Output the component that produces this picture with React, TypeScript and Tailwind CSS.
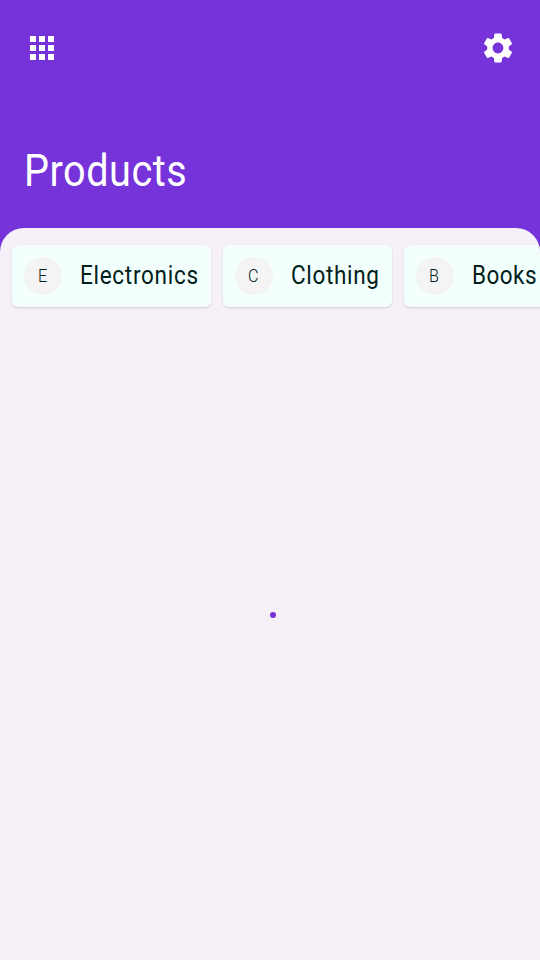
type Category = { name: string; card: string; label: string };

const categories: Category[] = [
  { name: 'Electronics', card: 'w-[199px]', label: 'tracking-[0.8px]' },
  { name: 'Clothing', card: 'w-[169px]', label: 'tracking-[0.75px]' },
  { name: 'Books', card: 'w-[160px]', label: 'tracking-[0.5px]' },
];

function AppsIcon() {
  return (
    <svg viewBox="0 0 24 24" className="h-6 w-6 fill-white" shapeRendering="crispEdges">
      {[0, 9, 18].map((y) => [0, 9, 18].map((x) => <rect key={`${x}-${y}`} x={x} y={y} width="6" height="6" />))}
    </svg>
  );
}

function SettingsIcon() {
  return (
    <svg viewBox="0 0 24 24" className="h-9 w-9 fill-white">
      <path d="M19.14 12.94c.04-.3.06-.61.06-.94 0-.32-.02-.64-.07-.94l2.03-1.58c.18-.14.23-.41.12-.61l-1.92-3.32c-.12-.22-.37-.29-.59-.22l-2.39.96c-.5-.38-1.03-.7-1.62-.94l-.36-2.54c-.04-.24-.24-.41-.48-.41h-3.84c-.24 0-.43.17-.47.41l-.36 2.54c-.59.24-1.13.57-1.62.94l-2.39-.96c-.22-.08-.47 0-.59.22L2.74 8.87c-.12.21-.08.47.12.61l2.03 1.58c-.05.3-.09.63-.09.94s.02.64.07.94l-2.03 1.58c-.18.14-.23.41-.12.61l1.92 3.32c.12.22.37.29.59.22l2.39-.96c.5.38 1.03.7 1.62.94l.36 2.54c.05.24.24.41.48.41h3.84c.24 0 .44-.17.47-.41l.36-2.54c.59-.24 1.13-.56 1.62-.94l2.39.96c.22.08.47 0 .59-.22l1.92-3.32c.12-.22.07-.47-.12-.61l-2.01-1.58zM12 15.6c-1.98 0-3.6-1.62-3.6-3.6s1.62-3.6 3.6-3.6 3.6 1.62 3.6 3.6-1.62 3.6-3.6 3.6z" />
    </svg>
  );
}

function CategoryCard({ name, card, label }: Category) {
  return (
    <button className={`flex h-[62px] shrink-0 items-center rounded-md bg-[#f3fffc] pl-3 text-[#00201a] shadow-[0_1px_2px_rgba(0,0,0,0.15)] ${card}`}>
      <span className="flex h-[37.5px] w-[37.5px] shrink-0 items-center justify-center rounded-full bg-[#f5f4f5] text-lg font-light">
        <span className="-translate-x-[0.5px] scale-x-90">{name[0]}</span>
      </span>
      <span className={`ml-[18.5px] origin-left scale-x-90 whitespace-nowrap text-[25px] ${label}`}>{name}</span>
    </button>
  );
}

export default function App() {
  return (
    <main className="flex h-[960px] w-[540px] flex-col overflow-hidden bg-[#7533d9] font-[Roboto,sans-serif]">
      <header className="h-[228px] shrink-0 text-white">
        <div className="flex h-24 items-center justify-between pl-[30px] pr-6">
          <AppsIcon />
          <SettingsIcon />
        </div>
        <h1 className="ml-[24px] origin-left scale-x-90 pt-[45px] text-[44px] leading-[60px] tracking-[0.6px]">Products</h1>
      </header>
      <section className="flex flex-1 flex-col overflow-hidden rounded-t-[24px] bg-[#f6f1f9]">
        <div className="flex gap-3 pl-3 pt-[17px]">
          {categories.map((category) => (
            <CategoryCard key={category.name} {...category} />
          ))}
        </div>
        <div className="flex flex-1 justify-center pl-[5px] pt-[305px]">
          <span className="h-[6px] w-[6px] rounded-full bg-[#7533d9]" />
        </div>
      </section>
    </main>
  );
}
